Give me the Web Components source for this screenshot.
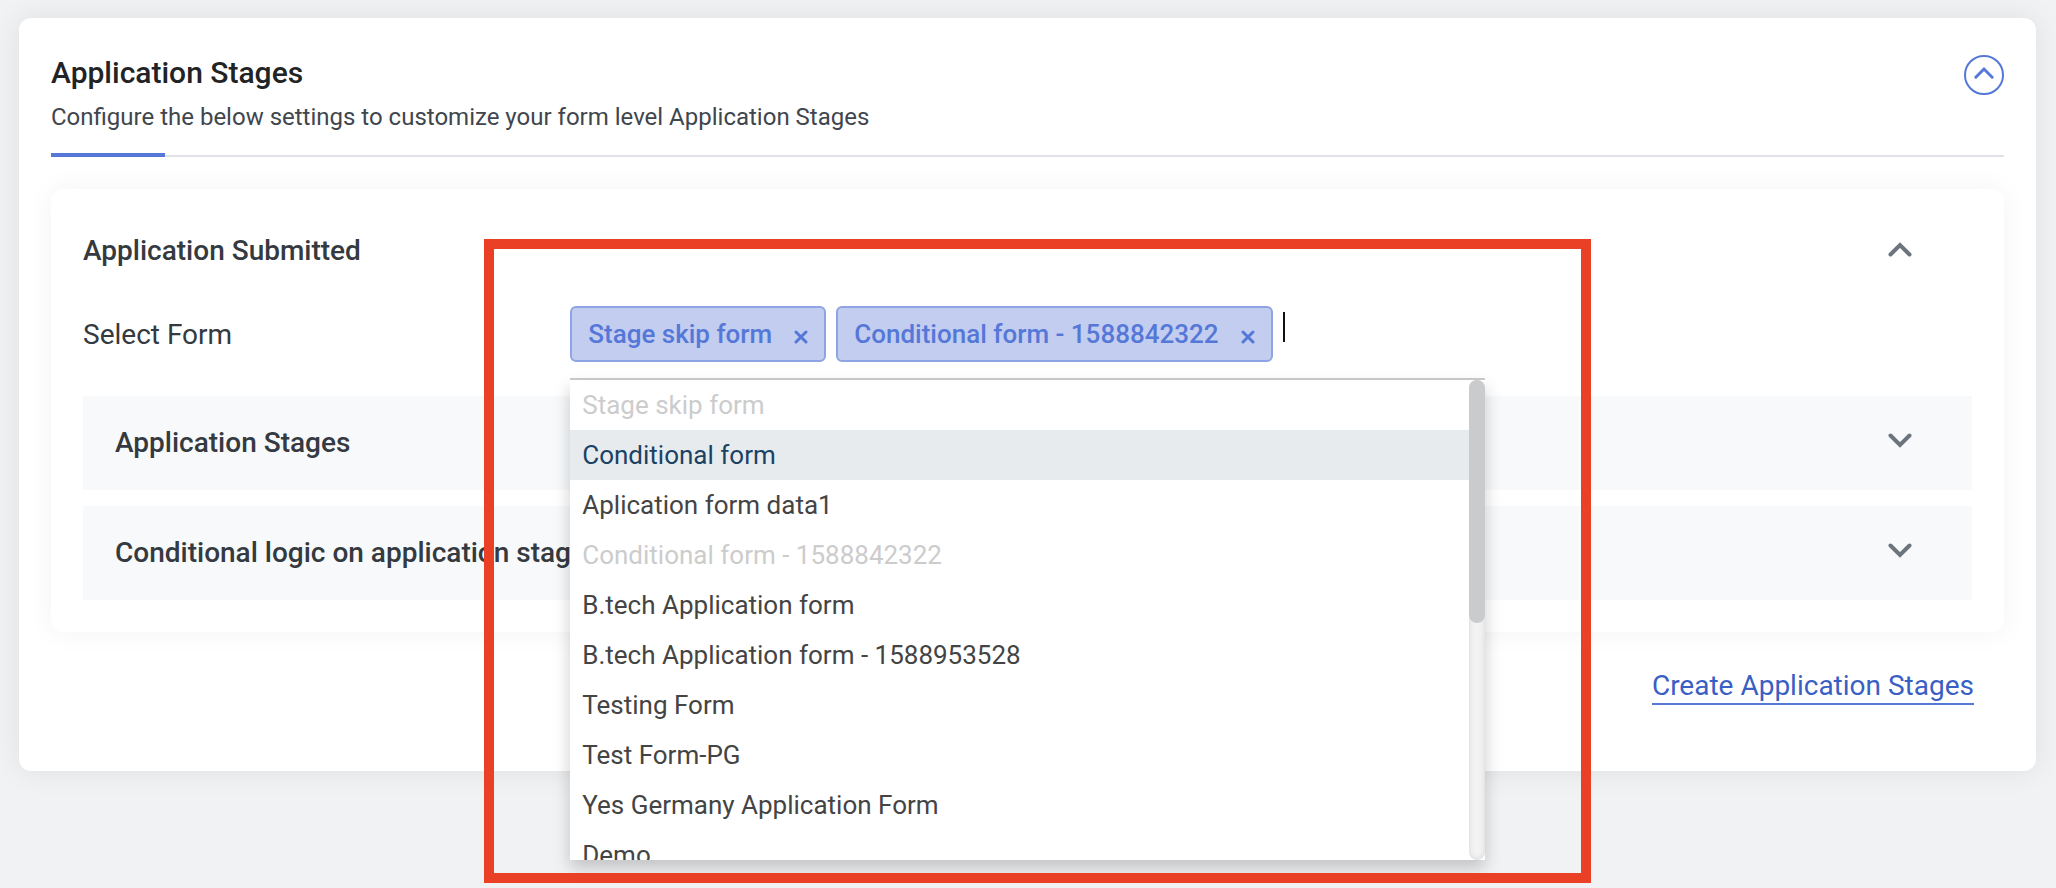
<!DOCTYPE html>
<html lang="en">
<head>
<meta charset="utf-8">
<title>Application Stages</title>
<style>
  body { margin: 0; background: #f1f2f4; font-family: Roboto, "Liberation Sans", sans-serif; color: #343a40; }
</style>
</head>
<body>
<settings-page></settings-page>

<template id="settings-page">
  <style>
    :host { display: block; padding: 18px 20px 116px 19px; }
  </style>
  <settings-card heading="Application Stages" subheading="Configure the below settings to customize your form level Application Stages">
    <stage-panel heading="Application Submitted">
      <form-field label="Select Form">
        <highlight-frame>
          <multi-select></multi-select>
        </highlight-frame>
      </form-field>
      <stage-section heading="Application Stages"></stage-section>
      <stage-section heading="Conditional logic on application stages"></stage-section>
    </stage-panel>
    <create-link slot="footer">Create Application Stages</create-link>
  </settings-card>
</template>

<template id="settings-card">
  <style>
    :host { display: block; background: #fff; border-radius: 12px; padding: 37px 32px 66px; box-shadow: 0 0 30px rgba(0,0,0,.08); }
    header { display: flex; justify-content: space-between; align-items: flex-start; height: 100px; border-bottom: 2px solid #e0e2e8; position: relative; }
    header::after { content: ""; position: absolute; left: 0; bottom: -2px; width: 114px; height: 4px; background: #5578d8; }
    h1 { margin: 0; font-size: 30px; line-height: 36px; font-weight: 500; color: #212325; }
    p { margin: 12px 0 0; font-size: 24px; line-height: 28px; color: #3f464d; }
    button { width: 40px; height: 40px; padding: 0; border: 2px solid #5578d8; border-radius: 50%; background: #fff; display: flex; align-items: center; justify-content: center; }
    .content { margin-top: 32px; }
    footer { display: flex; justify-content: flex-end; padding: 37px 30px 0; }
  </style>
  <header>
    <div><h1></h1><p></p></div>
    <button aria-label="Collapse section"><svg width="36" height="36" viewBox="0 0 36 36" fill="none" stroke="#5578d8" stroke-width="3" stroke-linecap="round"><path d="M9.8 20.2 18 12 26.2 20.2"/></svg></button>
  </header>
  <div class="content"><slot></slot></div>
  <footer><slot name="footer"></slot></footer>
</template>

<template id="stage-panel">
  <style>
    :host { display: block; background: #fff; border-radius: 12px; padding: 44px 32px 32px; box-shadow: 0 0 28px rgba(0,0,0,.05); }
    .head { display: flex; justify-content: space-between; align-items: center; padding-right: 60px; }
    h2 { margin: 0; font-size: 28px; line-height: 36px; font-weight: 500; }
    .body { display: flex; flex-direction: column; gap: 16px; margin-top: 37px; }
  </style>
  <div class="head"><h2></h2><chevron-button direction="up"></chevron-button></div>
  <div class="body"><slot></slot></div>
</template>

<template id="chevron-button">
  <style>
    :host { display: block; }
    :host([direction="up"]) .down, :host(:not([direction="up"])) .up { display: none; }
    button { display: block; border: 0; padding: 0; background: none; }
    svg { display: block; }
  </style>
  <button aria-label="Toggle section"><svg width="24" height="24" viewBox="0 0 24 24" fill="none" stroke="#6c757d" stroke-width="4" stroke-linecap="round"><path class="up" d="M2.5 15.5 12 6 21.5 15.5"/><path class="down" d="M2.5 4.5 12 14 21.5 4.5"/></svg></button>
</template>

<template id="form-field">
  <style>
    :host { display: grid; grid-template-columns: minmax(0, 3fr) minmax(0, 6fr) minmax(0, 3fr); align-items: start; }
    span { font-size: 28px; line-height: 58px; }
    .control { padding: 0 15px; }
  </style>
  <span id="label"></span>
  <div class="control"><slot></slot></div>
</template>

<template id="highlight-frame">
  <style>
    :host { display: block; position: relative; }
    .frame { position: absolute; z-index: 5; left: -86px; right: -106px; top: -67px; height: 624px; border: 10px solid #ea4126; pointer-events: none; }
  </style>
  <slot></slot>
  <div class="frame"></div>
</template>

<template id="multi-select">
  <style>
    :host { display: block; position: relative; }
    .field { display: flex; gap: 10px; padding-bottom: 16px; border-bottom: 2px solid #ccc; height: 56px; }
    input { flex: 1; min-width: 0; height: 56px; padding: 0; border: 0; outline: 0; background: none; font: 26px/30px Roboto, sans-serif; }
    .caret { width: 2px; height: 30px; margin-top: 6px; background: #111; }
    .menu { position: absolute; z-index: 3; left: 0; right: 0; top: 74px; height: 480px; display: flex; background: #fff; box-shadow: 0 8px 16px rgba(0,0,0,.2); }
    ul { flex: 1; margin: 0; padding: 0; list-style: none; overflow: hidden; font-size: 26px; line-height: 50px; color: #444; }
    li { height: 50px; padding-left: 12px; white-space: nowrap; }
    li[aria-disabled] { color: #ccc; }
    li[aria-selected] { background: #e8ebee; color: #1a4265; }
    .track { width: 16px; border-radius: 8px; background: #f3f3f3; box-shadow: inset 0 0 6px rgba(0,0,0,.12); }
    .thumb { height: 243px; border-radius: 8px; background: #cacbcd; }
  </style>
  <div class="field">
    <select-chip>Stage skip form</select-chip>
    <select-chip>Conditional form - 1588842322</select-chip>
    <div class="caret"></div>
    <input type="text" role="combobox" aria-expanded="true" aria-label="Select Form">
  </div>
  <div class="menu">
    <ul role="listbox" aria-label="Forms">
      <li role="option" aria-disabled="true">Stage skip form</li>
      <li role="option" aria-selected="true">Conditional form</li>
      <li role="option">Aplication form data1</li>
      <li role="option" aria-disabled="true">Conditional form - 1588842322</li>
      <li role="option">B.tech Application form</li>
      <li role="option">B.tech Application form - 1588953528</li>
      <li role="option">Testing Form</li>
      <li role="option">Test Form-PG</li>
      <li role="option">Yes Germany Application Form</li>
      <li role="option">Demo</li>
    </ul>
    <div class="track"><div class="thumb"></div></div>
  </div>
</template>

<template id="select-chip">
  <style>
    :host { display: flex; flex-shrink: 0; align-items: center; box-sizing: border-box; height: 56px; padding: 0 16px; border: 2px solid #8ea4e4; border-radius: 6px; background: #c2cdef; color: #5578d8; font-size: 26px; line-height: 30px; font-weight: 500; white-space: nowrap; }
    button { border: 0; padding: 0; margin: 6px 0 0 22px; background: none; }
    svg { display: block; }
  </style>
  <slot></slot>
  <button aria-label="Remove"><svg width="14" height="14" viewBox="0 0 14 14" stroke="#5578d8" stroke-width="3" stroke-linecap="round"><path d="M2 2 12 12M12 2 2 12"/></svg></button>
</template>

<template id="stage-section">
  <style>
    :host { display: flex; justify-content: space-between; align-items: center; height: 94px; padding: 0 60px 0 32px; background: #f8f9fb; }
    h3 { margin: 0; font-size: 28px; line-height: 36px; font-weight: 500; }
  </style>
  <h3></h3>
  <chevron-button></chevron-button>
</template>

<template id="create-link">
  <style>
    :host { display: block; }
    a { display: block; color: #3a5fc4; border-bottom: 2px solid #5578d8; font-size: 28px; line-height: 34px; text-decoration: none; }
  </style>
  <a href="#create"><slot></slot></a>
</template>

<script>
  class TemplateElement extends HTMLElement {
    constructor() {
      super();
      const template = document.getElementById(this.localName);
      this.attachShadow({ mode: "open" }).append(template.content.cloneNode(true));
    }
    fill(selector, attribute) {
      this.shadowRoot.querySelector(selector).textContent = this.getAttribute(attribute);
    }
  }
  customElements.define("chevron-button", class extends TemplateElement {});
  customElements.define("select-chip", class extends TemplateElement {});
  customElements.define("create-link", class extends TemplateElement {});
  customElements.define("multi-select", class extends TemplateElement {});
  customElements.define("highlight-frame", class extends TemplateElement {});
  customElements.define("form-field", class extends TemplateElement {
    connectedCallback() { this.fill("#label", "label"); }
  });
  customElements.define("stage-section", class extends TemplateElement {
    connectedCallback() { this.fill("h3", "heading"); }
  });
  customElements.define("stage-panel", class extends TemplateElement {
    connectedCallback() { this.fill("h2", "heading"); }
  });
  customElements.define("settings-card", class extends TemplateElement {
    connectedCallback() { this.fill("h1", "heading"); this.fill("p", "subheading"); }
  });
  customElements.define("settings-page", class extends TemplateElement {});
</script>
</body>
</html>
